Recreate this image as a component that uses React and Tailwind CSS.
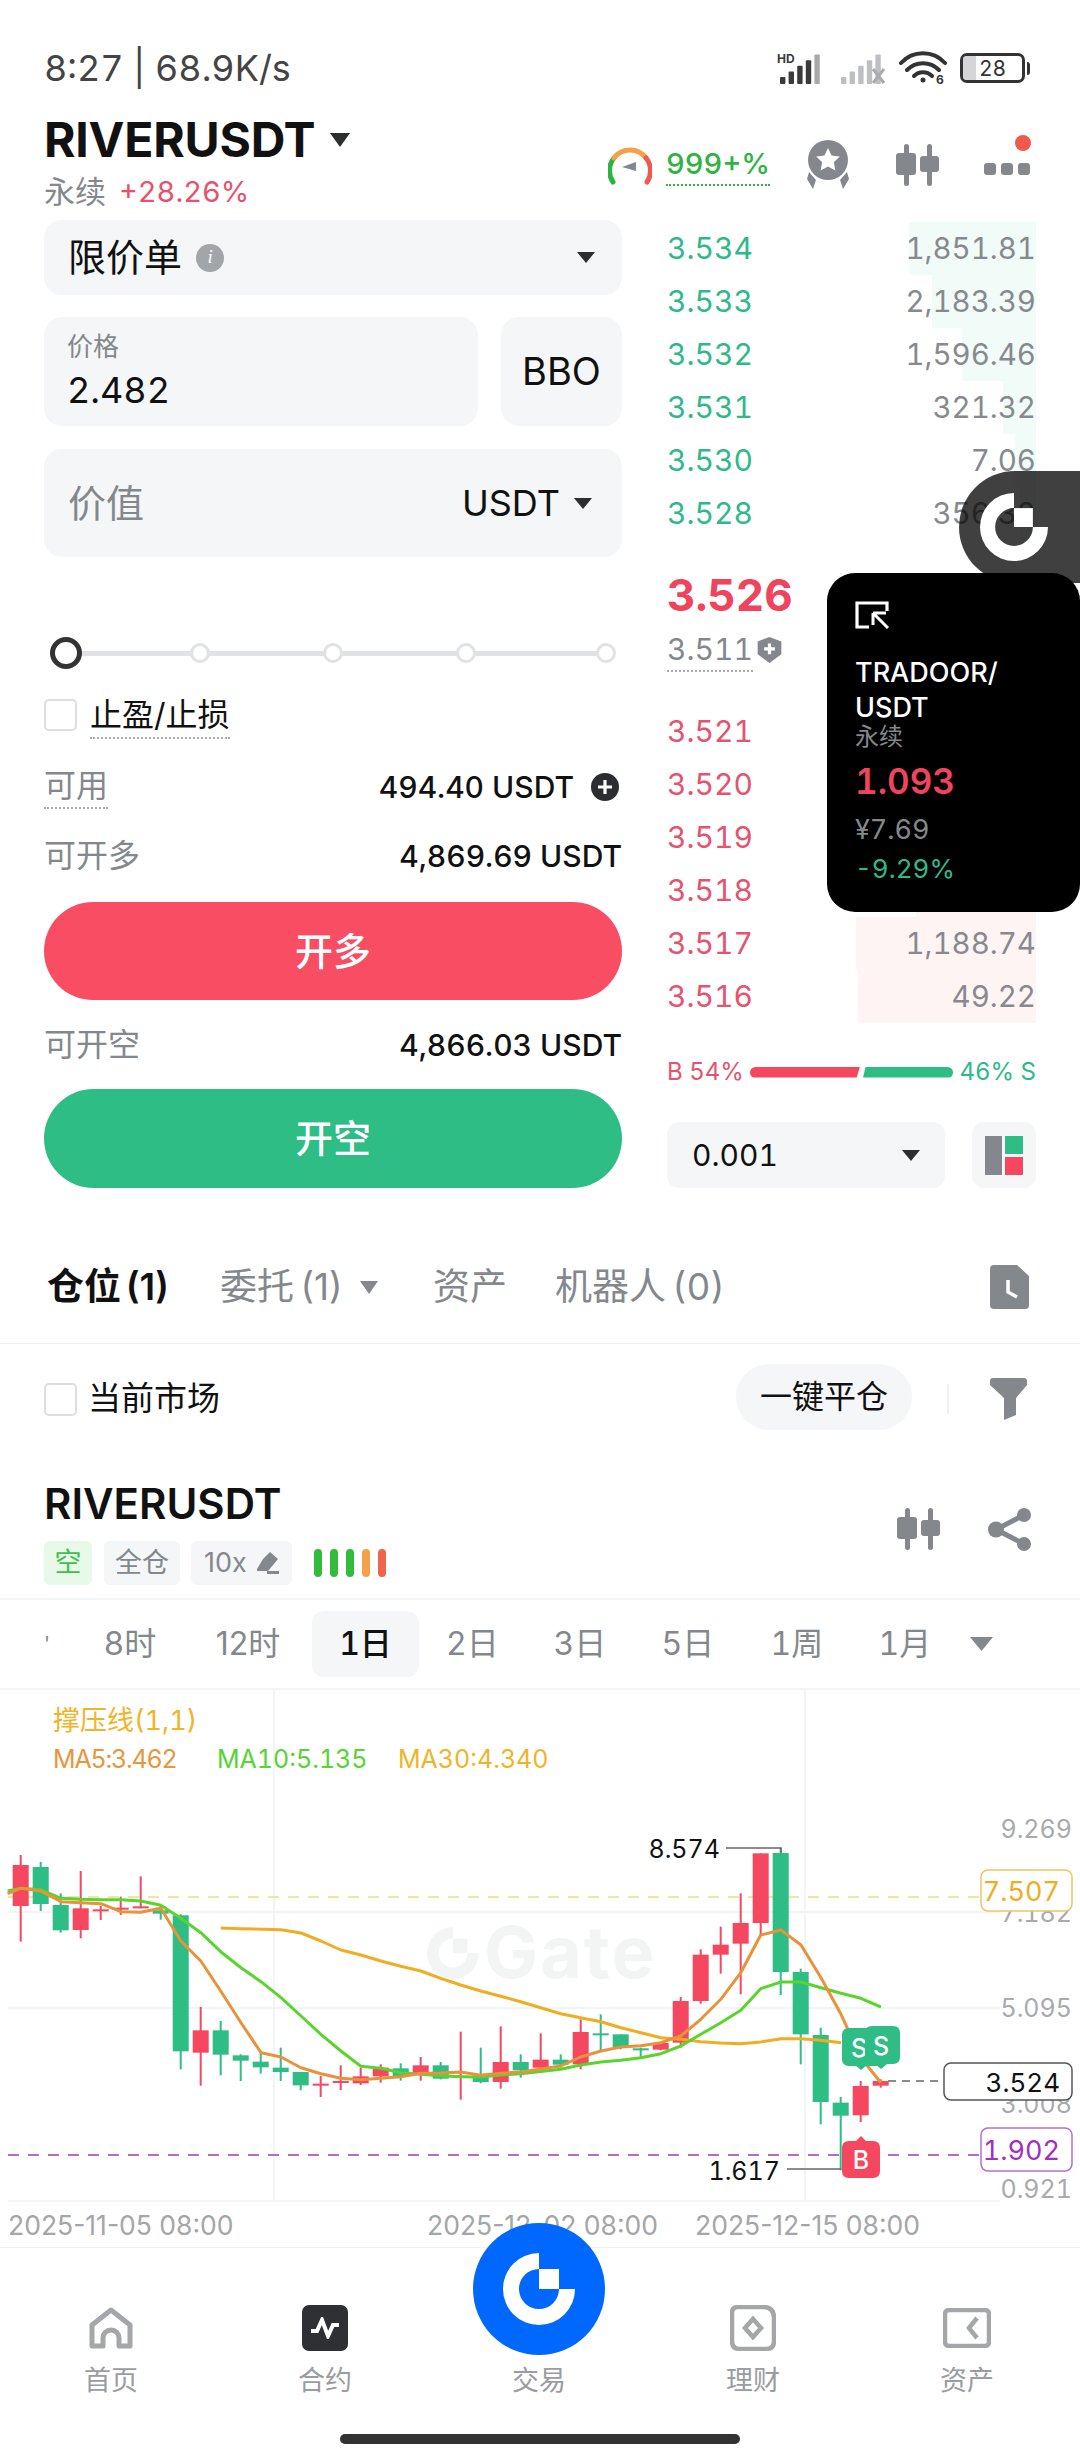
import React from "react";

const Caret = ({ w = 18, h = 11, c = "#2b2d30" }) => (
  <svg width={w} height={h} viewBox="0 0 18 11" preserveAspectRatio="none" className="shrink-0"><path d="M0 0H18L9 11Z" fill={c} /></svg>
);

const GateLogo = ({ size = 72, c = "#fff" }) => (
  <svg width={size} height={size} viewBox="-36 -36 72 72">
    <path d="M0 -36A36 36 0 1 0 36 0H20A20 20 0 1 1 0 -20Z" fill={c} />
    <rect x="0" y="-20" width="20" height="20" fill={c} />
  </svg>
);

const CandleIcon = ({ c = "#84888c" }) => (
  <svg width="44" height="42" viewBox="0 0 44 42" fill={c}>
    <rect x="9" y="0" width="5" height="42" rx="2.5" /><rect x="1" y="9" width="20" height="22" rx="3" />
    <rect x="32" y="0" width="5" height="42" rx="2.5" /><rect x="25" y="12" width="19" height="16" rx="3" />
  </svg>
);

const Signal = ({ off }) => (
  <svg width="48" height="32" viewBox="0 0 48 32">
    {!off && <text x="0" y="11" fontSize="12" fontWeight="700" fill="#3a3a3a">HD</text>}
    {[0, 1, 2, 3, 4].map((i) => {
      const h = 7 + i * 5.6;
      return <rect key={i} x={3 + i * 8.6} y={32 - h} width="5.4" height={h} rx="1" fill={off ? "#bdbfc2" : i === 4 ? "#a9a9a9" : "#3a3a3a"} />;
    })}
    {off && <path d="M35 17L46 31M46 17L35 31" stroke="#a9abae" strokeWidth="3" />}
  </svg>
);

const Wifi = () => (
  <svg width="48" height="46" viewBox="0 -6 48 46" fill="none" stroke="#333" strokeWidth="4" strokeLinecap="round">
    <path d="M2 12C14 -1 34 -1 46 12" /><path d="M8 19C17 10 31 10 40 19" /><path d="M15 25C20 20 28 20 33 25" />
    <circle cx="24" cy="29" r="2.5" fill="#333" stroke="none" />
    <text x="37" y="33" fontSize="12" fontWeight="700" fill="#333" stroke="none">6</text>
  </svg>
);

const Battery = () => (
  <div className="flex items-center">
    <div className="relative flex h-[30px] w-[65px] items-center justify-center rounded-[7px] border-[3px] border-[#333]">
      <div className="absolute bottom-0 left-0 top-0 w-[13px] rounded-l-[4px] bg-[#d4d5d6]" />
      <span className="relative text-[21px] leading-none text-[#333]">28</span>
    </div>
    <div className="ml-[2px] h-[13px] w-[3px] rounded-r bg-[#333]" />
  </div>
);

const asks = [
  ["3.534", "1,851.81", 127],
  ["3.533", "2,183.39", 104],
  ["3.532", "1,596.46", 74],
  ["3.531", "321.32", 33],
  ["3.530", "7.06", 21],
  ["3.528", "356.32", 16],
];
const bids = [
  ["3.521", "", 40],
  ["3.520", "", 60],
  ["3.519", "", 90],
  ["3.518", "", 120],
  ["3.517", "1,188.74", 180],
  ["3.516", "49.22", 178],
];

const candles = [
  ["R",222,252,375,482],["G",243,258,369,390],["G",337,372,448,455],["R",270,382,447,472],["R",375,385,388,417],
  ["R",347,380,384,402],["R",286,376,381,382],["G",375,388,398,416],["G",400,403,811,865],["R",678,748,815,914],
  ["G",720,748,821,883],["G",820,823,839,900],["G",815,842,859,878],["G",800,860,873,900],["G",873,873,913,928],
  ["R",885,908,913,948],["R",853,900,905,927],["R",860,886,907,912],["R",850,860,886,905],["G",847,862,885,899],
  ["R",828,853,880,899],["G",843,853,893,895],["R",752,884,889,956],["G",800,880,903,907],["R",736,843,903,923],
  ["G",820,843,868,890],["R",757,836,860,866],["G",820,836,851,860],["R",715,753,850,865],["G",700,757,760,812],
  ["G",760,760,800,805],["G",800,802,805,828],["R",786,786,806,808],["R",648,660,785,800],["R",505,521,660,668],
  ["R",437,491,521,578],["R",337,426,488,640],["R",217,217,426,460],["G",200,216,573,642],["G",563,573,760,850],
  ["G",740,762,963,1030],["G",948,965,1004,1168],["R",900,915,1003,1023],["R",895,900,914,920],
];

const pt6 = (p) => `${(p[0] / 2.904).toFixed(1)},${(1780 + p[1] / 3).toFixed(1)}`;
const pt7 = (p) => `${(540 + p[0] / 2.904).toFixed(1)},${(1780 + p[1] / 3).toFixed(1)}`;
const line = (a, b) => [...a.map(pt6), ...b.map(pt7)].join(" ");

const ma5 = line(
  [[22,338],[60,322],[118,330],[177,362],[235,365],[293,368],[351,392],[409,394],[467,382],[525,480],[583,540],[641,630],[700,725],[758,815],[816,828],[874,860],[932,878],[990,892],[1048,896],[1106,892],[1164,887],[1222,877],[1280,876],[1338,873],[1396,883],[1454,877],[1512,873]],
  [[60,855],[118,828],[177,810],[235,798],[293,794],[351,785],[409,765],[467,715],[525,655],[583,575],[641,462],[700,447],[758,492],[816,590],[874,700],[932,830],[990,905]]
);
const ma10 = line(
  [[22,330],[60,322],[118,326],[177,352],[235,355],[293,356],[351,356],[409,360],[467,373],[525,412],[583,455],[641,512],[700,560],[758,602],[816,650],[874,705],[932,760],[990,810],[1048,856],[1106,862],[1164,875],[1222,880],[1280,884],[1338,887],[1396,888],[1454,882],[1512,878]],
  [[60,865],[118,852],[177,843],[235,838],[293,830],[351,818],[409,795],[467,760],[525,725],[583,688],[641,623],[700,603],[758,603],[816,620],[874,637],[932,652],[990,678]]
);
const ma30 = line(
  [[641,441],[700,443],[816,446],[874,456],[932,480],[990,507],[1048,522],[1106,540],[1164,556],[1222,570],[1280,592],[1338,612],[1396,630],[1454,646],[1512,662]],
  [[60,698],[118,710],[177,722],[235,740],[293,755],[351,770],[409,775],[467,782],[525,786],[583,788],[641,783],[700,773],[758,773],[816,778],[874,785]]
);

const GREEN = "#2dbd85";
const RED = "#f5475f";

const Chart = () => (
  <svg className="absolute inset-0" width="1080" height="557" viewBox="0 1689 1080 557">
    {[1911, 2007, 2200].map((y) => <line key={y} x1="8" x2="1000" y1={y} y2={y} stroke="#f3f4f5" strokeWidth="2" />)}
    {[274, 805].map((x) => <line key={x} x1={x} x2={x} y1="1689" y2="2200" stroke="#f3f4f5" strokeWidth="2" />)}
    <g opacity="0.9">
      <g transform="translate(453 1952) scale(0.72)"><path d="M0 -36A36 36 0 1 0 36 0H20A20 20 0 1 1 0 -20Z" fill="#f2f4f5" /><rect x="0" y="-20" width="20" height="20" fill="#f2f4f5" /></g>
      <text x="484" y="1977" fontSize="72" fontWeight="700" letterSpacing="2" fill="#f2f4f5">Gate</text>
    </g>
    <line x1="8" x2="981" y1="1896" y2="1896" stroke="#e8df86" strokeWidth="1.5" strokeDasharray="11 9" />
    <line x1="8" x2="981" y1="2154" y2="2154" stroke="#9a3fb0" strokeWidth="1.5" strokeDasharray="11 9" />
    <line x1="888" x2="944" y1="2080" y2="2080" stroke="#666" strokeWidth="1.5" strokeDasharray="8 6" />
    {candles.map((c, i) => {
      const x = 20.7 + 20 * i;
      const col = c[0] === "R" ? RED : GREEN;
      const top = 1780 + c[2] / 3;
      const bot = 1780 + c[3] / 3;
      return (
        <g key={i} fill={col}>
          <rect x={x - 1} y={1780 + c[1] / 3} width="2" height={(c[4] - c[1]) / 3} />
          <rect x={x - 8} y={top} width="16" height={Math.max(bot - top, 2)} />
        </g>
      );
    })}
    <polyline points={ma30} fill="none" stroke="#f0ad22" strokeWidth="3" strokeLinejoin="round" />
    <polyline points={ma10} fill="none" stroke="#59d52e" strokeWidth="3" strokeLinejoin="round" />
    <polyline points={ma5} fill="none" stroke="#e8933a" strokeWidth="3" strokeLinejoin="round" />
    <path d="M726 1847H781V1852" fill="none" stroke="#666" strokeWidth="1.5" />
    <path d="M787 2168H841" fill="none" stroke="#666" strokeWidth="1.5" />
    <text x="720" y="1857" textAnchor="end" fontSize="25" fill="#111">8.574</text>
    <text x="780" y="2179" textAnchor="end" fontSize="25" fill="#111">1.617</text>
    {[["9.269", 1828], ["7.182", 1912], ["5.095", 2007], ["3.008", 2103], ["0.921", 2188]].map(([t, y]) => (
      <text key={t} x="1072" y={y + 9} textAnchor="end" fontSize="25" fill="#a8aaad">{t}</text>
    ))}
    <rect x="981" y="1869" width="91" height="41" rx="7" fill="#fff" stroke="#f0c560" strokeWidth="1.5" />
    <text x="1060" y="1900" textAnchor="end" fontSize="27" fill="#f0ad22">7.507</text>
    <rect x="944" y="2062" width="128" height="37" rx="7" fill="#fff" stroke="#555" strokeWidth="1.5" />
    <text x="1060" y="2091" textAnchor="end" fontSize="26" fill="#111">3.524</text>
    <rect x="981" y="2127" width="91" height="43" rx="7" fill="#fff" stroke="#b36fd0" strokeWidth="1.5" />
    <text x="1060" y="2159" textAnchor="end" fontSize="27" fill="#a02fc4">1.902</text>
    <path d="M849 2027H880V2065H866L861 2069L856 2065H849Q842 2065 842 2058V2034Q842 2027 849 2027Z" fill={GREEN} />
    <text x="859" y="2056" textAnchor="middle" fontSize="25" fontWeight="500" fill="#fff">S</text>
    <path d="M872 2025H893Q900 2025 900 2032V2056Q900 2063 893 2063H887L881 2068L875 2063H872Q865 2063 865 2056V2032Q865 2025 872 2025Z" fill={GREEN} />
    <text x="881" y="2054" textAnchor="middle" fontSize="25" fontWeight="500" fill="#fff">S</text>
    <path d="M849 2140H856L861 2135L866 2140H873Q880 2140 880 2147V2170Q880 2177 873 2177H849Q842 2177 842 2170V2147Q842 2140 849 2140Z" fill={RED} />
    <text x="861" y="2168" textAnchor="middle" fontSize="25" fontWeight="500" fill="#fff">B</text>
    <text className="normal-nums" x="8" y="2234" fontSize="26.5" fill="#a4a6a9">2025-11-05 08:00</text>
    <text className="normal-nums" x="427" y="2234" fontSize="26.5" fill="#a4a6a9">2025-12-02 08:00</text>
    <text className="normal-nums" x="695" y="2234" fontSize="26.5" fill="#a4a6a9">2025-12-15 08:00</text>
  </svg>
);

const BookRow = ({ row, red }) => (
  <div className="relative flex h-[53px] items-center justify-between">
    <div className={red ? "absolute bottom-0 right-0 top-0 bg-[#fef4f4]" : "absolute bottom-0 right-0 top-0 bg-[#f1fbf7]"} style={{ width: row[2] }} />
    <span className={red ? "relative text-[30px] text-[#e5536e]" : "relative text-[30px] text-[#2fb98a]"}>{row[0]}</span>
    <span className="relative text-[29.5px] text-[#868a8e]">{row[1]}</span>
  </div>
);

const Stat = ({ label, value, underline, extra }) => (
  <div className="flex h-[44px] items-center justify-between">
    <span className={underline ? "border-b-2 border-dotted border-[#a9abae] text-[32px] leading-[42px] text-[#84888c]" : "text-[32px] text-[#84888c]"}>{label}</span>
    <span className="flex items-center text-[30px] font-[450] text-[#111]">{value}{extra}</span>
  </div>
);

const NavItem = ({ label, children }) => (
  <div className="flex w-[214px] flex-col items-center">
    <div className="flex h-[46px] items-center justify-center">{children}</div>
    <span className="mt-[16px] text-[27px] leading-[28px] text-[#9a9c9f]">{label}</span>
  </div>
);

export default function App() {
  return (
    <div className="relative flex h-[2460px] w-[1080px] flex-col overflow-hidden bg-white tabular-nums [font-family:Inter,'Noto_Sans_CJK_SC',sans-serif]">
      {/* status */}
      <div className="flex h-[104px] items-center justify-between pl-[44px] pr-[50px] pt-[32px]">
        <span className="text-[36px] text-[#444]">8:27 | 68.9K/s</span>
        <div className="flex items-center gap-[13px]"><Signal /><Signal off /><Wifi /><Battery /></div>
      </div>
      {/* header */}
      <div className="flex h-[116px] items-start justify-between pl-[44px] pr-[50px] pt-[14px]">
        <div>
          <div className="flex h-[44px] items-center">
            <span className="text-[48px] font-bold tracking-[-0.2px] text-[#111]">RIVERUSDT</span>
            <span className="ml-[15px]"><Caret w={20} h={14} /></span>
          </div>
          <div className="mt-[12px] flex h-[36px] items-center">
            <span className="text-[31px] text-[#84888c]">永续</span>
            <span className="ml-[13px] text-[29px] text-[#e8506b]">+28.26%</span>
          </div>
        </div>
        <div className="relative flex items-center pt-[22px]">
          <svg width="44" height="42" viewBox="0 0 44 42" fill="none" strokeWidth="5" strokeLinecap="round">
            <path d="M5 38A20 20 0 0 1 6 14" stroke="#2fb344" /><path d="M6 14A20 20 0 0 1 38 14" stroke="#f5a04a" /><path d="M38 14A20 20 0 0 1 39 38" stroke="#ef5a50" />
            <path d="M14 23L28 18V27Z" fill="#84888c" />
          </svg>
          <span className="ml-[14px] border-b-2 border-dotted border-[#2fb344] text-[29px] font-medium leading-[40px] text-[#2fb344]">999+%</span>
          <svg className="ml-[36px]" width="44" height="50" viewBox="0 0 44 50">
            <circle cx="22" cy="20" r="20" fill="#84888c" /><path d="M22 8l3.6 7.6 8.2 1-6 5.7 1.6 8.2-7.4-4-7.4 4 1.6-8.2-6-5.7 8.2-1z" fill="#fff" />
            <path d="M3 32l7 8-3 9-6-10zM41 32l-7 8 3 9 6-10z" fill="#84888c" />
          </svg>
          <span className="ml-[45px]"><CandleIcon /></span>
          <div className="relative ml-[45px] flex gap-[5px] pt-[8px]">
            <div className="h-[12px] w-[12px] rounded-[3px] bg-[#84888c]" /><div className="h-[12px] w-[12px] rounded-[3px] bg-[#84888c]" /><div className="h-[12px] w-[12px] rounded-[3px] bg-[#84888c]" />
            <div className="absolute right-[-1px] top-[-20px] h-[16px] w-[16px] rounded-full bg-[#f0594c]" />
          </div>
        </div>
      </div>

      {/* trade */}
      <div className="flex h-[968px]">
        <div className="ml-[44px] flex w-[578px] flex-col">
          <div className="flex h-[75px] items-center justify-between rounded-[18px] bg-[#f5f6f7] pl-[24px] pr-[27px]">
            <div className="flex items-center">
              <span className="text-[38px] text-[#111]">限价单</span>
              <span className="ml-[14px] flex h-[28px] w-[28px] items-center justify-center rounded-full bg-[#a3a6a9] text-[19px] italic text-white [font-family:'Liberation_Serif',serif]">i</span>
            </div>
            <Caret />
          </div>
          <div className="mt-[22px] flex h-[109px] gap-[23px]">
            <div className="flex w-[434px] flex-col justify-center rounded-[18px] bg-[#f5f6f7] pl-[23px]">
              <span className="text-[26px] leading-[32px] text-[#84888c]">价格</span>
              <span className="mt-[5px] text-[36px] leading-[44px] text-[#111]">2.482</span>
            </div>
            <div className="flex flex-1 items-center justify-center rounded-[18px] bg-[#f5f6f7] text-[38px] text-[#111]">BBO</div>
          </div>
          <div className="mt-[23px] flex h-[108px] items-center justify-between rounded-[18px] bg-[#f5f6f7] pl-[24px] pr-[30px]">
            <span className="text-[38px] text-[#84888c]">价值</span>
            <div className="flex items-center gap-[14px]"><span className="text-[36px] text-[#111]">USDT</span><Caret /></div>
          </div>
          <div className="relative ml-[6px] mt-[80px] flex h-[32px] w-[566px] items-center">
            <div className="absolute left-[20px] right-[10px] top-[14px] h-[5px] bg-[#e0e2e4]" />
            <div className="relative h-[32px] w-[32px] rounded-full border-[5px] border-[#333] bg-white" />
            <div className="relative ml-[108px] h-[20px] w-[20px] rounded-full border-[3px] border-[#e0e2e4] bg-white" />
            <div className="relative ml-[113px] h-[20px] w-[20px] rounded-full border-[3px] border-[#e0e2e4] bg-white" />
            <div className="relative ml-[113px] h-[20px] w-[20px] rounded-full border-[3px] border-[#e0e2e4] bg-white" />
            <div className="relative ml-[120px] h-[20px] w-[20px] rounded-full border-[3px] border-[#e0e2e4] bg-white" />
          </div>
          <div className="mt-[30px] flex h-[32px] items-center">
            <div className="h-[32px] w-[33px] rounded-[5px] border-2 border-[#dcdee0]" />
            <span className="ml-[13px] border-b-2 border-dotted border-[#a9abae] pt-[2px] text-[32px] leading-[44px] text-[#111]">止盈/止损</span>
          </div>
          <div className="mt-[34px]">
            <Stat label="可用" underline value="494.40 USDT" extra={
              <span className="ml-[17px] mr-[3px] flex h-[28px] w-[28px] items-center justify-center rounded-full bg-[#2b2d30] text-white">
                <svg width="16" height="16" viewBox="0 0 16 16"><path d="M8 1V15M1 8H15" stroke="#fff" strokeWidth="3.2" /></svg>
              </span>
            } />
          </div>
          <div className="mt-[25px]"><Stat label="可开多" value="4,869.69 USDT" /></div>
          <div className="mt-[24px] flex h-[98px] items-center justify-center rounded-full bg-[#f84d63] text-[38px] font-medium text-white">开多</div>
          <div className="mt-[23px]"><Stat label="可开空" value="4,866.03 USDT" /></div>
          <div className="mt-[22px] flex h-[99px] items-center justify-center rounded-full bg-[#2dbd85] text-[38px] font-medium text-white">开空</div>
        </div>

        <div className="ml-[45px] flex w-[369px] flex-col pt-[2px]">
          {asks.map((r) => <BookRow key={r[0]} row={r} />)}
          <div className="flex h-[165px] flex-col pt-[30px]">
            <span className="text-[44px] font-bold leading-[50px] text-[#f0445e]">3.526</span>
            <div className="mt-[8px] flex items-center">
              <span className="border-b-2 border-dotted border-[#a9abae] text-[30px] leading-[42px] text-[#84888c]">3.511</span>
              <svg className="ml-[3px]" width="27" height="28" viewBox="0 0 24 26"><path d="M12 1L23 5V17L12 25L1 17V5Z" fill="#84888c" /><path d="M12 7V17M7 12H17" stroke="#fff" strokeWidth="3" /></svg>
            </div>
          </div>
          {bids.map((r) => <BookRow key={r[0]} row={r} red />)}
          <div className="mt-[29px] flex h-[40px] items-center whitespace-nowrap text-[24px]">
            <span className="w-[83px] text-[#e5536e]">B 54%</span>
            <div className="h-[11px] w-[110px] rounded-l-full bg-[#f5475f] [clip-path:polygon(0_0,100%_0,97%_100%,0_100%)]" />
            <div className="ml-[3px] h-[11px] w-[90px] rounded-r-full bg-[#2dbd85] [clip-path:polygon(3%_0,100%_0,100%_100%,0_100%)]" />
            <span className="ml-auto text-[#2fb98a]">46% S</span>
          </div>
          <div className="mt-[30px] flex h-[66px] gap-[27px]">
            <div className="flex w-[280px] items-center justify-between rounded-[12px] bg-[#f5f6f7] pl-[25px] pr-[25px]">
              <span className="text-[30px] text-[#111]">0.001</span><Caret />
            </div>
            <div className="flex w-[65px] items-center justify-center rounded-[12px] bg-[#f5f6f7]">
              <svg width="38" height="39" viewBox="0 0 38 39"><rect width="17" height="39" fill="#84888c" /><rect x="20" width="18" height="18" fill="#2dbd85" /><rect x="20" y="21" width="18" height="18" fill="#f5475f" /></svg>
            </div>
          </div>
        </div>
      </div>

      {/* tabs */}
      <div className="mt-[69px] flex h-[60px] items-center pl-[47px] pr-[51px] text-[37px] text-[#84888c] [word-spacing:-4px]">
        <span className="w-[173px] font-bold normal-nums text-[#111]">仓位 <span className="font-semibold">(1)</span></span>
        <span className="w-[140px] normal-nums">委托 (1)</span>
        <Caret w={18} h={13} c="#84888c" />
        <span className="ml-[55px] w-[122px]">资产</span>
        <span>机器人 (0)</span>
        <svg className="ml-auto" width="39" height="44" viewBox="0 0 39 44"><path d="M4 0H27L39 11V40Q39 44 35 44H4Q0 44 0 40V4Q0 0 4 0Z" fill="#84888c" /><path d="M18 15V27L27 32" fill="none" stroke="#fff" strokeWidth="3.5" /></svg>
      </div>
      <div className="mt-[26px] h-[1px] bg-[#f0f1f2]" />
      {/* current market */}
      <div className="flex h-[110px] items-center pl-[44px] pr-[53px]">
        <div className="h-[33px] w-[33px] rounded-[5px] border-2 border-[#dcdee0]" />
        <span className="ml-[11px] text-[33px] text-[#111]">当前市场</span>
        <span className="-mt-[4px] ml-auto flex h-[66px] w-[176px] items-center justify-center rounded-full bg-[#f5f6f7] text-[32px] text-[#111]">一键平仓</span>
        <div className="ml-[35px] h-[30px] w-[2px] bg-[#f0f1f2]" />
        <svg className="ml-[41px]" width="37" height="42" viewBox="0 0 37 42"><path d="M3 0H34Q37 0 37 3V7L26 20V37L14 42V20L0 7V3Q0 0 3 0Z" fill="#84888c" /></svg>
      </div>
      {/* position */}
      <div className="mt-[30px] flex justify-between pl-[44px] pr-[48px]">
        <div>
          <div className="text-[42px] font-semibold leading-[40px] text-[#111]">RIVERUSDT</div>
          <div className="mt-[17px] flex h-[44px] items-center">
            <span className="flex h-[44px] w-[48px] items-center justify-center rounded-[6px] bg-[#e8f9ea] text-[27px] text-[#3cc04a]">空</span>
            <span className="ml-[12px] flex h-[44px] w-[76px] items-center justify-center rounded-[6px] bg-[#f5f6f7] text-[27px] text-[#84888c]">全仓</span>
            <span className="ml-[11px] flex h-[44px] w-[101px] items-center justify-center gap-[8px] rounded-[6px] bg-[#f5f6f7] text-[27px] normal-nums text-[#84888c]">
              10x
              <svg width="24" height="24" viewBox="0 0 24 24" fill="#84888c"><path d="M15 1L23 8L13 20H2V18L8 8Z" /><rect x="12" y="20" width="12" height="3" /></svg>
            </span>
            <div className="ml-[22px] flex gap-[8px]">
              <div className="h-[28px] w-[8px] rounded-full bg-[#32bb3c]" /><div className="h-[28px] w-[8px] rounded-full bg-[#32bb3c]" /><div className="h-[28px] w-[8px] rounded-full bg-[#32bb3c]" /><div className="h-[28px] w-[8px] rounded-full bg-[#f5a04a]" /><div className="h-[28px] w-[8px] rounded-full bg-[#f0634c]" />
            </div>
          </div>
        </div>
        <div className="flex items-start gap-[48px] pt-[24px]">
          <CandleIcon />
          <svg width="44" height="43" viewBox="0 0 44 43" fill="#84888c"><circle cx="36" cy="7" r="7" /><circle cx="36" cy="36" r="7" /><circle cx="8" cy="21.5" r="8" /><path d="M8 21.5L36 7M8 21.5L36 36" stroke="#84888c" strokeWidth="5" /></svg>
        </div>
      </div>
      <div className="mt-[13px] h-[2px] bg-[#f3f4f5]" />
      {/* period tabs */}
      <div className="flex h-[88px] items-center text-center text-[32px] text-[#84888c]">
        <span className="ml-[44px] w-[32px] text-left text-[20px] leading-none">&#39;</span>
        <span className="w-[108px]">8时</span>
        <span className="w-[128px] normal-nums">12时</span>
        <span className="flex h-[66px] w-[107px] items-center justify-center rounded-[12px] bg-[#f5f6f7] font-medium text-[#111]">1日</span>
        <span className="w-[107px]">2日</span>
        <span className="w-[108px]">3日</span>
        <span className="w-[108px]">5日</span>
        <span className="w-[110px]">1周</span>
        <span className="w-[106px]">1月</span>
        <span className="ml-[12px]"><Caret w={23} h={14} c="#84888c" /></span>
      </div>
      <div className="h-[2px] bg-[#f3f4f5]" />
      {/* chart */}
      <div className="relative h-[557px]">
        <Chart />
        <div className="relative pl-[53px] pt-[15px]">
          <div className="text-[27px] leading-[32px] text-[#f0b429]">撑压线(1,1)</div>
          <div className="mt-[6px] flex text-[25px] leading-[32px]">
            <span className="w-[164px] tracking-[-1.2px] text-[#e8963c]">MA5:3.462</span>
            <span className="w-[181px] text-[#55d433]">MA10:5.135</span>
            <span className="text-[#f0b429]">MA30:4.340</span>
          </div>
        </div>
      </div>
      <div className="h-[1px] bg-[#f0f1f2]" />
      {/* nav */}
      <div className="flex pl-[4px] pt-[57px]">
        <NavItem label="首页">
          <svg width="44" height="42" viewBox="0 0 44 42" fill="none" stroke="#a4a6a9" strokeWidth="5" strokeLinejoin="round"><path d="M22 3L41 18V39H30V31A8 8 0 0 0 14 31V39H3V18Z" /></svg>
        </NavItem>
        <NavItem label="合约">
          <div className="flex h-[46px] w-[46px] items-center justify-center rounded-[7px] bg-[#2f3033]">
            <svg width="30" height="22" viewBox="0 0 30 22" fill="none" stroke="#fff" strokeWidth="4"><path d="M1 14H7L12 3L18 19L23 8H29" /></svg>
          </div>
        </NavItem>
        <NavItem label="交易"><div className="h-[46px] w-[46px]" /></NavItem>
        <NavItem label="理财">
          <svg width="46" height="46" viewBox="0 0 46 46" fill="none" stroke="#a4a6a9" strokeWidth="4.5"><path d="M8 2H33Q44 2 44 13V36Q44 44 36 44H10Q2 44 2 36V8Q2 2 8 2Z" /><path d="M23 14L31 23L23 32L15 23Z" /></svg>
        </NavItem>
        <NavItem label="资产">
          <svg width="48" height="40" viewBox="0 0 48 40" fill="none" stroke="#a4a6a9" strokeWidth="4.5"><rect x="2" y="2" width="44" height="36" rx="4" /><path d="M34 10L26 20L34 30" /></svg>
        </NavItem>
      </div>
      <div className="mt-[39px] ml-[340px] h-[10px] w-[400px] rounded-full bg-[#333]" />

      {/* floating */}
      <div className="absolute left-[473px] top-[2223px] flex h-[132px] w-[132px] items-center justify-center rounded-full bg-[#0068ff]">
        <GateLogo size={72} />
      </div>
      <div className="absolute left-[959px] top-[471px] flex h-[112px] w-[121px] items-center rounded-l-[56px] bg-black/75 pl-[21px]">
        <GateLogo size={68} />
      </div>
      <div className="absolute left-[827px] top-[573px] h-[339px] w-[253px] rounded-[28px] bg-black pl-[28px] pt-[28px]">
        <svg width="34" height="28" viewBox="0 0 34 28" fill="none" stroke="#fff" strokeWidth="3.2"><path d="M21 2H2V26H14" /><path d="M21 2H32V10" /><path d="M18 12H31M18 12V24M19 13L33 27" strokeWidth="3" /></svg>
        <div className="mt-[26px] text-[27px] font-medium leading-[35px] text-white">TRADOOR/<br />USDT</div>
        <div className="text-[24px] leading-[24px] text-[#84888c]">永续</div>
        <div className="mt-[9px] text-[35px] font-semibold leading-[46px] text-[#f0445e]">1.093</div>
        <div className="mt-[9px] text-[27px] leading-[34px] text-[#84888c]">¥7.69</div>
        <div className="mt-[5px] text-[26px] leading-[34px] text-[#2fb98a]">-9.29%</div>
      </div>
    </div>
  );
}
